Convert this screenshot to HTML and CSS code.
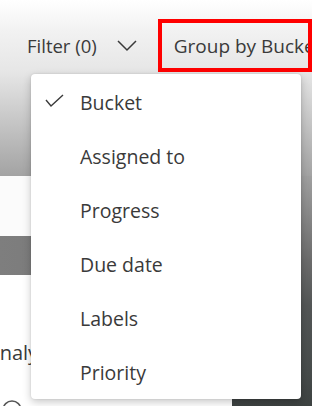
FILE: index.html
```html
<!DOCTYPE html>
<html lang="en">
<head>
  <meta charset="UTF-8">
  <meta name="viewport" content="width=device-width, initial-scale=1">
  <title>Group by</title>
  <link rel="stylesheet" href="styles.css">
</head>
<body>
  <header class="hero">
    <div class="toolbar">
      <button class="filter-btn">
        <span>Filter (0)</span>
        <svg class="chevron" width="20" height="12" viewBox="0 0 20 12"><path d="M1 1 L10 10 L19 1" fill="none" stroke="#3a3a3a" stroke-width="1.5"/></svg>
      </button>
      <button class="group-btn">Group by Bucket</button>
    </div>
  </header>
  <main class="below">
    <div class="left-pane">
      <div class="blank"></div>
      <div class="band"></div>
      <div class="analysis">Analysis</div>
      <div class="icon-row">
        <svg width="22" height="22" viewBox="0 0 22 22"><circle cx="11" cy="11" r="9" fill="none" stroke="#555" stroke-width="1.5"/><path d="M7 9 H15" stroke="#555" stroke-width="1.5"/></svg>
      </div>
    </div>
    <div class="right-pane"></div>
  </main>

  <ul class="menu">
    <li class="menu-item checked">
      <svg class="check" width="20" height="16" viewBox="0 0 20 16"><path d="M1 7 L6 13 L18 2" fill="none" stroke="#3a3a3a" stroke-width="1.4"/></svg>
      Bucket
    </li>
    <li class="menu-item">Assigned to</li>
    <li class="menu-item">Progress</li>
    <li class="menu-item">Due date</li>
    <li class="menu-item">Labels</li>
    <li class="menu-item">Priority</li>
  </ul>
</body>
</html>
```

FILE: styles.css
```css
:root {
  --text: #3a3a3a;
  --red: #f00;
}
* { box-sizing: border-box; margin: 0; padding: 0; }
body {
  position: relative;
  width: 312px;
  height: 406px;
  overflow: hidden;
  font-family: 'Open Sans', 'Noto Sans', sans-serif;
  color: var(--text);
  background: #fff;
}
.hero {
  height: 176px;
  background: linear-gradient(#fff 0, #f2f2f2 30px, #e6e6e6 72px, #a3a3a3 176px);
}
.toolbar {
  display: flex;
  align-items: flex-start;
  padding: 19px 0 0 27px;
}
button {
  font: inherit;
  color: inherit;
  background: none;
  border: none;
}
.filter-btn {
  display: flex;
  align-items: center;
  gap: 20px;
  height: 53px;
  font-size: 18.5px;
  white-space: nowrap;
}
.group-btn {
  flex: none;
  margin-left: 21px;
  height: 53px;
  width: 154px;
  padding-left: 12px;
  border: 4px solid var(--red);
  font-size: 19px;
  text-align: left;
  white-space: nowrap;
  overflow: hidden;
}
.below {
  display: flex;
  height: 230px;
  overflow: hidden;
}
.left-pane {
  flex: 1;
  display: flex;
  flex-direction: column;
}
.left-pane > * { flex: none; }
.blank {
  height: 60px;
  background: #fbfbfb;
}
.band {
  height: 39px;
  background: linear-gradient(90deg, #7e7e7e, #727272);
}
.analysis {
  margin: 66px 0 0 -13px;
  font-size: 20px;
  line-height: 24px;
}
.icon-row {
  margin: 34px 0 0 1px;
}
.right-pane {
  width: 80px;
  background: linear-gradient(#a0a0a0, #6c6c6c 84px, #535656 130px, #464b4a 200px, #3d4241);
}
.menu {
  position: absolute;
  top: 74px;
  left: 31px;
  width: 270px;
  padding-top: 1px;
  list-style: none;
  background: #fff;
  border-radius: 4px;
  box-shadow: 0 3px 8px rgba(0, 0, 0, .22), 0 0 2px rgba(0, 0, 0, .12);
}
.menu-item {
  position: relative;
  display: flex;
  align-items: center;
  height: 54px;
  padding-left: 49px;
  font-size: 19.5px;
}
.check {
  position: absolute;
  left: 14px;
  top: 18px;
}
```
